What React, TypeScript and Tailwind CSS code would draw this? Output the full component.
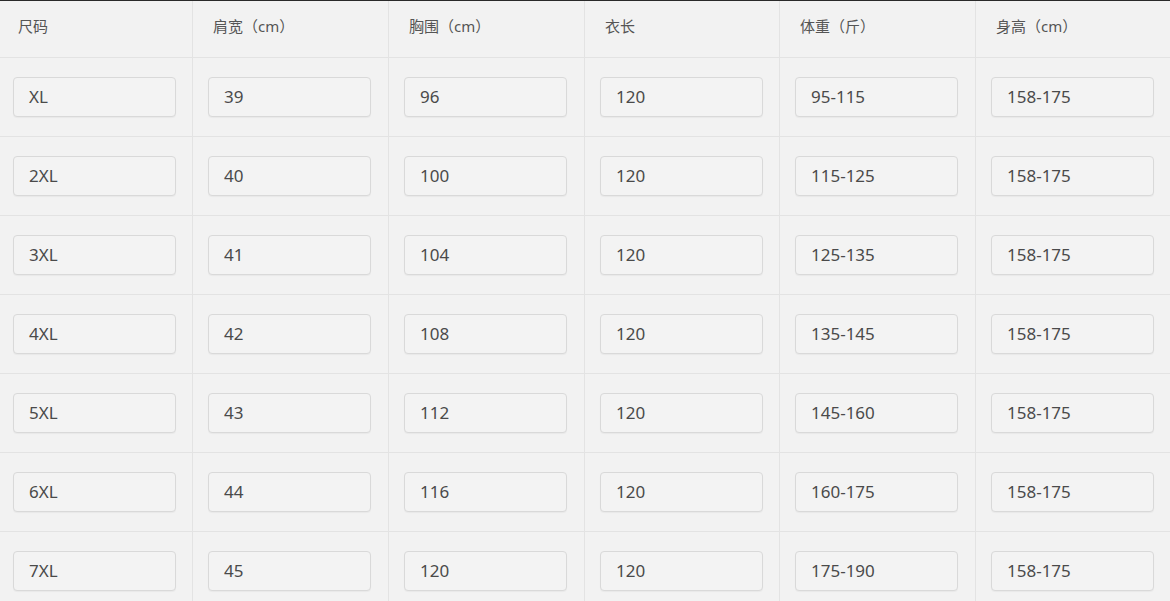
const headers = ['尺码', '肩宽（cm）', '胸围（cm）', '衣长', '体重（斤）', '身高（cm）']

const rows = [
  ['XL', '39', '96', '120', '95-115', '158-175'],
  ['2XL', '40', '100', '120', '115-125', '158-175'],
  ['3XL', '41', '104', '120', '125-135', '158-175'],
  ['4XL', '42', '108', '120', '135-145', '158-175'],
  ['5XL', '43', '112', '120', '145-160', '158-175'],
  ['6XL', '44', '116', '120', '160-175', '158-175'],
  ['7XL', '45', '120', '120', '175-190', '158-175'],
]

const font = { fontFamily: '"Noto Sans", "Noto Sans CJK SC", sans-serif' }

export default function App() {
  return (
    <div
      className="w-[1170px] h-[601px] overflow-hidden bg-[#f2f2f2] border-t border-[#2a2a2a] text-[#444]"
      style={font}
    >
      <div className="grid grid-cols-[192px_196px_196px_195px_196px_195px]">
        {headers.map((h, i) => (
          <div
            key={h}
            className={`h-[57px] flex items-center pb-[6px] border-b border-[#e3e3e3] text-[15px] text-[#555] ${
              i === 0 ? 'pl-[18px]' : 'pl-[20px] border-l'
            }`}
          >
            {h}
          </div>
        ))}
        {rows.map((row, r) =>
          row.map((cell, c) => (
            <div
              key={`${r}-${c}`}
              className={`h-[79px] flex items-center border-b border-[#e3e3e3] ${
                c === 0 ? 'pl-[13px]' : 'pl-[15px] border-l'
              }`}
            >
              <div className="w-[163px] h-[40px] flex items-center pl-[15px] rounded-[4px] border border-[#d9d9d9] bg-[#f3f3f3] shadow-[0_1px_1px_rgba(0,0,0,0.04)] text-[17px] text-[#4a4a4a]">
                {cell}
              </div>
            </div>
          ))
        )}
      </div>
    </div>
  )
}
